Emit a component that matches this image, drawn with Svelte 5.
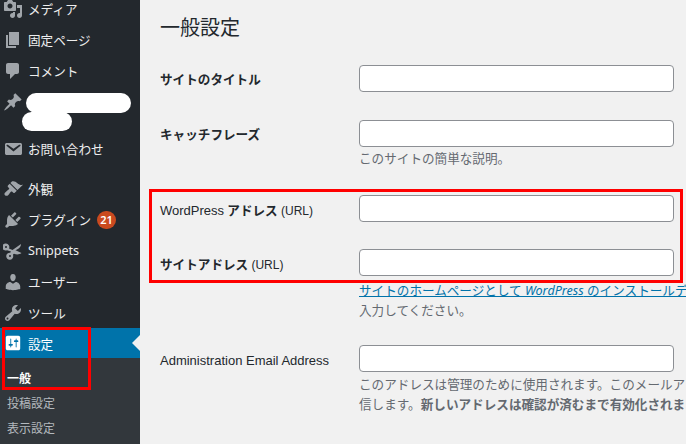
<script>
  const ICONS = {
    media: 'M13 11V4c0-.55-.45-1-1-1h-1.670L9 1H5L3.670 3H2c-.55 0-1 .45-1 1v7c0 .55.45 1 1 1h10c.55 0 1-.45 1-1zM7 4.500c1.380 0 2.500 1.120 2.500 2.500S8.380 9.500 7 9.500 4.500 8.380 4.500 7 5.620 4.500 7 4.500zM14 6h5v10.500c0 1.380-1.120 2.500-2.500 2.500S14 17.880 14 16.500s1.120-2.500 2.500-2.500c.17 0 .34.02.5.05V9h-3V6zm-4 8.050V13h2v3.500c0 1.380-1.120 2.500-2.500 2.500S7 17.880 7 16.500 8.120 14 9.500 14c.17 0 .34.02.5.05z',
    page: 'M6 15V2h10v13H6zm-1 1h8v2H3V5h2v11z',
    comment: 'M5 2h9c1.100 0 2 .9 2 2v7c0 1.100-.9 2-2 2h-2l-5 5v-5H5c-1.100 0-2-.9-2-2V4c0-1.100.9-2 2-2z',
    pin: 'M10.440 3.020l1.820-1.820 6.360 6.350-1.830 1.820c-1.050-.68-2.480-.57-3.410.36l-.75.75c-.92.93-1.040 2.350-.35 3.410l-1.830 1.820-2.410-2.410-2.800 2.790c-.42.42-3.380 2.710-3.800 2.290s1.860-3.390 2.280-3.810l2.790-2.790L4.100 9.360l1.830-1.820c1.050.69 2.480.57 3.400-.36l.75-.75c.93-.92 1.050-2.350.36-3.410z',
    mail: 'M3.870 4h13.250C18.370 4 19 4.590 19 5.790v8.420c0 1.190-.63 1.790-1.880 1.790H3.870c-1.250 0-1.880-.6-1.880-1.790V5.790c0-1.200.63-1.790 1.880-1.790zm6.620 8.600l6.740-5.530c.24-.2.43-.66.13-1.070-.29-.41-.82-.42-1.170-.17l-5.700 3.860L4.800 5.830c-.35-.25-.88-.24-1.170.17-.3.41-.11.87.13 1.070z',
    brush: 'M14.480 11.060L7.410 3.990l1.500-1.500c.5-.56 2.300-.47 3.510.32 1.210.8 1.430 1.280 2.910 2.100 1.180.64 2.450 1.260 4.670.85zm-.71.71L6.700 4.700 4.930 6.470c-.39.39-.39 1.020 0 1.410l1.060 1.060c.39.39.39 1.030 0 1.420-.6.6-1.430 1.110-2.210 1.690-.35.26-.7.53-1.010.84C1.430 13.710.96 15.180 2 16.240c1.030 1.040 2.500.57 3.330-.34.31-.31.58-.66.84-1.010.58-.78 1.090-1.610 1.690-2.210.39-.39 1.020-.39 1.410 0l1.060 1.060c.39.39 1.020.39 1.410 0z',
    plug: 'M13.110 4.360L9.870 7.600 8 5.730l3.240-3.240c.35-.34 1.050-.2 1.560.32.52.51.66 1.210.31 1.550zm-8 1.770l.91-1.120 9.010 9.010-1.190.84c-.71.71-2.630 1.160-3.820 1.160H6.140L4.900 17.260c-.59.59-1.540.59-2.120 0-.59-.58-.59-1.530 0-2.120l1.240-1.240v-3.880c0-1.130.4-3.190 1.090-3.890zm7.260 3.970l3.240-3.240c.34-.35 1.040-.21 1.550.31.52.51.66 1.210.31 1.550l-3.240 3.250z',
    user: 'M10 9.250c-2.270 0-2.730-3.440-2.730-3.440C7 4.020 7.820 2 9.970 2c2.160 0 2.980 2.020 2.710 3.810 0 0-.41 3.440-2.680 3.440zm0 2.570L12.720 10c2.390 0 4.520 2.330 4.520 4.530v2.490s-3.650 1.130-7.240 1.130c-3.650 0-7.240-1.130-7.240-1.130v-2.490c0-2.250 1.940-4.480 4.470-4.480z',
    wrench: 'M16.680 9.770c-1.340 1.340-3.300 1.670-4.950.99l-5.410 6.520c-.99.99-2.590.99-3.580 0s-.99-2.590 0-3.570l6.520-5.420c-.68-1.650-.35-3.610.99-4.950 1.280-1.280 3.120-1.620 4.720-1.060l-2.890 2.890 2.820 2.820 2.860-2.870c.53 1.580.18 3.400-1.080 4.670zM3.810 16.210c.4.39 1.030.39 1.420 0 .4-.4.4-1.030 0-1.430-.39-.39-1.020-.39-1.420 0-.39.4-.39 1.030 0 1.430z',
    sliders: 'M18 16V4c0-1.100-.9-2-2-2H4c-1.100 0-2 .9-2 2v12c0 1.100.9 2 2 2h12c1.100 0 2-.9 2-2zM8 11h1c.55 0 1 .45 1 1s-.45 1-1 1H8v1.500c0 .28-.22.5-.5.5s-.5-.22-.5-.5V13H6c-.55 0-1-.45-1-1s.45-1 1-1h1V5.500c0-.28.22-.5.5-.5s.5.22.5.5V11zm5-2h-1c-.55 0-1-.45-1-1s.45-1 1-1h1V5.500c0-.28.22-.5.5-.5s.5.22.5.5V7h1c.55 0 1 .45 1 1s-.45 1-1 1h-1v5.500c0 .28-.22.5-.5.5s-.5-.22-.5-.5V9z',
    scissors: 'M3 2.500a3.500 3.500 0 0 1 3 5L9.500 9 18 3c0 2.500-1.500 4.500-4 5.500l-1.500.8 6 2.700c-2.500 1.800-5 1.700-7.500.7l-1 .8.2 1.200a3.500 3.500 0 1 1-3-3L8 10.500 4 9.200A3.500 3.500 0 1 1 3 2.500zM3 5a1 1 0 1 0 0 2 1 1 0 0 0 0-2zM7 14a1 1 0 1 0 0 2 1 1 0 0 0 0-2z'
  };

  const MENU = [
    { icon: 'media', label: 'メディア' },
    { icon: 'page', label: '固定ページ' },
    { icon: 'comment', label: 'コメント' },
    { icon: 'pin', label: '', tall: true },
    { icon: 'mail', label: 'お問い合わせ', gap: true },
    { icon: 'brush', label: '外観' },
    { icon: 'plug', label: 'プラグイン', badge: 21 },
    { icon: 'scissors', label: 'Snippets' },
    { icon: 'user', label: 'ユーザー' },
    { icon: 'wrench', label: 'ツール' }
  ];
</script>

<div class="page">
  <nav class="sidebar">
    <ul class="menu">
      {#each MENU as item}
        <li class="item" class:tall={item.tall} class:gap={item.gap}>
          <svg class="icon" viewBox="0 0 20 20"><path d={ICONS[item.icon]} /></svg>
          <span>{item.label}</span>
          {#if item.badge}<b class="badge">{item.badge}</b>{/if}
        </li>
      {/each}
      <li class="item current">
        <svg class="icon" viewBox="0 0 20 20"><path d={ICONS.sliders} /></svg>
        <span>設定</span>
      </li>
    </ul>
    <ul class="submenu">
      <li class="active">一般</li>
      <li>投稿設定</li>
      <li>表示設定</li>
    </ul>
  </nav>

  <main class="content">
    <h1>一般設定</h1>

    <div class="row first">
      <label for="blogname">サイトのタイトル</label>
      <input id="blogname" type="text" />
    </div>

    <div class="row tagline">
      <label for="tagline">キャッチフレーズ</label>
      <div>
        <input id="tagline" type="text" />
        <p class="desc">このサイトの簡単な説明。</p>
      </div>
    </div>

    <div class="row wp-url">
      <label for="siteurl"><span class="latin">WordPress</span> アドレス <span class="latin small">(URL)</span></label>
      <input id="siteurl" type="text" />
    </div>

    <div class="row home-url">
      <label for="home">サイトアドレス <span class="latin small">(URL)</span></label>
      <div>
        <input id="home" type="text" />
        <p class="desc">
          <a href="#home">サイトのホームページとして <i>WordPress</i> のインストールデ</a><br />入力してください。
        </p>
      </div>
    </div>

    <div class="row email">
      <label for="email"><span class="latin">Administration Email Address</span></label>
      <div>
        <input id="email" type="text" />
        <p class="desc">
          このアドレスは管理のために使用されます。このメールア<br />信します。<strong>新しいアドレスは確認が済むまで有効化されま</strong>
        </p>
      </div>
    </div>
  </main>

  <!-- annotations painted on the screenshot -->
  <div class="blob one"></div>
  <div class="blob two"></div>
  <div class="mark side"></div>
  <div class="mark fields"></div>
</div>

<style>
  :global(body) {
    margin: 0;
    background: #f1f1f1;
  }

  .page {
    position: relative;
    display: flex;
    width: 686px;
    height: 444px;
    overflow: hidden;
    font-family: "Noto Sans", "Noto Sans CJK JP", sans-serif;
    font-size: 13px;
    color: #23282d;
  }

  .sidebar {
    flex: 0 0 140px;
    background: #23282d;
    color: #eee;
  }

  ul {
    list-style: none;
    margin: 0;
    padding: 0;
  }

  .menu {
    margin-top: -7px;
  }

  .item {
    display: flex;
    align-items: center;
    height: 31px;
    font-size: 12.6px;
  }

  .item.tall {
    align-items: flex-start;
    height: 47px;
  }

  .item.tall .icon {
    margin-top: 6px;
  }

  .item.gap {
    margin-bottom: 9px;
  }

  .icon {
    flex: 0 0 20px;
    width: 20px;
    height: 20px;
    margin: 0 5px 0 3px;
    fill: #a0a5aa;
  }

  .badge {
    display: inline-block;
    min-width: 19px;
    height: 18px;
    margin-left: 6px;
    border-radius: 9px;
    background: #ca4a1f;
    color: #fff;
    font-size: 11px;
    font-weight: 600;
    line-height: 18px;
    text-align: center;
  }

  .current {
    position: relative;
    height: 30px;
    background: #0073aa;
    color: #fff;
  }

  .current .icon {
    flex-basis: 18px;
    width: 18px;
    height: 18px;
    margin: 0 6px 0 4px;
    fill: #fff;
  }

  .current::after {
    content: '';
    position: absolute;
    right: 0;
    top: 7px;
    border: 8px solid transparent;
    border-right-color: #f1f1f1;
    border-left-width: 0;
  }

  .submenu {
    height: 120px;
    padding-top: 8px;
    background: #32373c;
    color: #b4b9be;
  }

  .submenu li {
    height: 25px;
    padding-left: 7px;
    font-size: 12px;
    line-height: 25px;
  }

  .submenu .active {
    color: #fff;
    font-weight: 700;
  }

  .content {
    flex: 1;
    min-width: 0;
    padding-left: 20px;
    white-space: nowrap;
  }

  h1 {
    margin: 13px 0 0;
    font-size: 20px;
    font-weight: 400;
    line-height: 30px;
  }

  .row {
    display: grid;
    grid-template-columns: 199px 315px;
  }

  .row.first {
    margin-top: 22px;
  }

  .row.tagline {
    margin-top: 28px;
  }

  .row.wp-url {
    margin-top: 26px;
  }

  .row.home-url {
    margin-top: 27px;
  }

  .row.email {
    margin-top: 24px;
  }

  label {
    height: 27px;
    font-size: 12.6px;
    font-weight: 700;
    line-height: 29px;
  }

  .wp-url label,
  .home-url label,
  .email label {
    line-height: 31px;
  }

  .latin {
    font-family: "Liberation Sans", sans-serif;
    font-size: 13px;
    font-weight: 400;
  }

  .latin.small {
    font-size: 12px;
  }

  input {
    display: block;
    box-sizing: border-box;
    width: 315px;
    height: 27px;
    margin: 0;
    border: 1px solid #8c8f94;
    border-radius: 4px;
    background: #fff;
  }

  .desc {
    margin: 3px 0 0;
    color: #646970;
    font-size: 12.6px;
    line-height: 20px;
  }

  .tagline .desc {
    margin-top: 2px;
  }

  .home-url .desc {
    margin-top: 5px;
  }

  a {
    color: #0073aa;
  }

  .blob {
    position: absolute;
    background: #fff;
    border-radius: 10px;
  }

  .blob.one {
    left: 26px;
    top: 93px;
    width: 105px;
    height: 20px;
  }

  .blob.two {
    left: 22px;
    top: 112px;
    width: 50px;
    height: 19px;
  }

  .mark {
    position: absolute;
    box-sizing: border-box;
    border: 3px solid #f00;
  }

  .mark.side {
    left: 2px;
    top: 327px;
    width: 89px;
    height: 63px;
  }

  .mark.fields {
    left: 149px;
    top: 189px;
    width: 534px;
    height: 94px;
  }
</style>
